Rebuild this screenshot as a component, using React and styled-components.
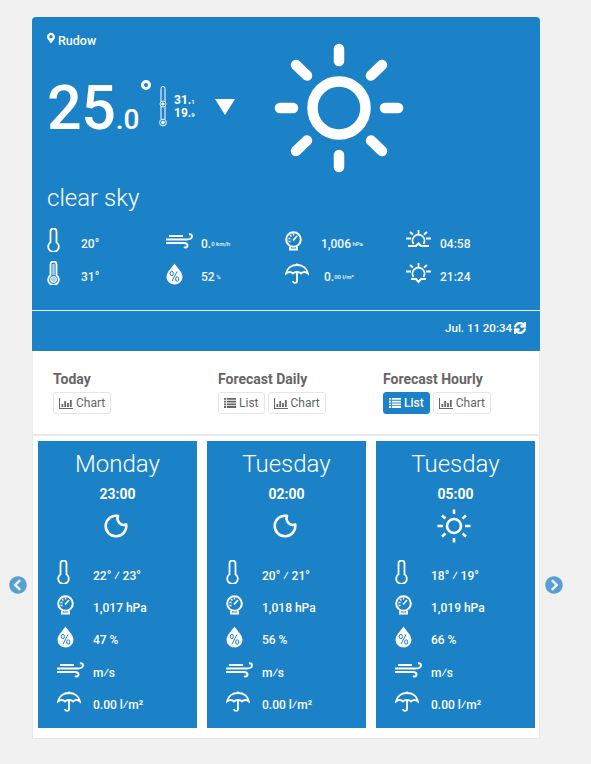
import React from "react";
import styled, { createGlobalStyle } from "styled-components";
import { FaChevronCircleLeft, FaChevronCircleRight, FaMapMarkerAlt, FaSync } from "react-icons/fa";

const Global = createGlobalStyle`
  html, body { margin: 0; padding: 0; background: #f1f1f1; }
  body { font-family: Roboto, "Liberation Sans", sans-serif; height: 764px; overflow: hidden; }
`;
const BLUE = "#1c82c7";

const Wrapper = styled.div`
  width: 508px; margin: 17px 0 0 32px; position: relative;
`;
const Hero = styled.section`
  background: ${BLUE}; color: #fff; border-radius: 4px 4px 0 0; height: 334px;
  display: flex; flex-direction: column;
`;
const HeroMain = styled.div`
  height: 294px; box-sizing: border-box; padding: 14px 0 0 15px; border-bottom: 1px solid #e4f1fa;
  display: flex; flex-direction: column;
`;
const Location = styled.div`
  display: flex; align-items: center; gap: 3px; height: 18px; font-size: 12.5px; font-weight: 500;
  svg { width: 8px; height: 12px; margin-top: -5px; }
`;
const NowRow = styled.div`
  display: flex; height: 109px; margin-top: 2px; position: relative;
`;
const BigTemp = styled.div`
  font-size: 61px; font-weight: 500; line-height: 66px; margin: 24px 0 0 0; letter-spacing: -0.3px;
  width: 94px; white-space: nowrap;
  small { font-size: 28px; font-weight: 500; letter-spacing: 0; }
`;
const Degree = styled.span`
  width: 10px; height: 10px; box-sizing: border-box; border: 3px solid #fff; border-radius: 50%;
  margin: 29px 0 0 0; flex: none;
`;
const DoubleThermo = styled.svg`
  width: 10px; height: 42px; margin: 35px 0 0 7px; flex: none;
`;
const MinMax = styled.div`
  font-size: 12px; font-weight: 700; line-height: 13px; margin: 43px 0 0 6px; width: 41px;
  small { font-size: 6px; line-height: 0; }
`;
const Trend = styled.span`
  width: 0; height: 0; border-left: 10px solid transparent; border-right: 10px solid transparent;
  border-top: 16px solid #fff; margin: 48px 0 0 0; flex: none;
`;
const BigSunBox = styled.div`
  width: 130px; height: 130px; margin: -8px 0 0 39px; flex: none;
`;
const Condition = styled.div`
  font-size: 24px; font-weight: 300; line-height: 28px; margin-top: 24px;
`;
const Stats = styled.div`
  display: grid; grid-template-columns: 119px 119px 120px 90px; grid-auto-rows: 33px; margin-top: 15px;
`;
const Stat = styled.div`
  display: flex; align-items: center; font-size: 12px; font-weight: 500; color: #f2f8fc;
  small { font-size: 6px; }
`;
const StatIcon = styled.span`
  width: ${p => p.$w || 34}px; display: flex; flex: none; align-items: center; margin-top: -6px;
`;
const Updated = styled.div`
  flex: 1; display: flex; align-items: center; justify-content: flex-end; gap: 2px; padding: 0 14px 6px 0;
  font-size: 11.5px; font-weight: 500;
  svg { width: 12px; height: 12px; stroke: currentColor; stroke-width: 30px; }
`;
const Menu = styled.nav`
  background: #fff; height: 83px; box-sizing: border-box; padding: 20px 0 0 20px;
  display: grid; grid-template-columns: repeat(3, 165px);
  border-left: 1px solid #ececec; border-right: 1px solid #ececec;
`;
const MenuGroup = styled.div`display: flex; flex-direction: column;`;
const MenuTitle = styled.div`
  font-size: 14px; font-weight: 700; color: #666; line-height: 16px; margin-bottom: 5px; white-space: nowrap;
`;
const Buttons = styled.div`display: flex; gap: 3px;`;
const Btn = styled.button`
  height: 22px; box-sizing: border-box; padding: 0 5px; border-radius: 3px; display: flex; align-items: center; gap: 3px;
  font: 400 12px Roboto, sans-serif;
  background: ${p => p.$active ? BLUE : "#fff"}; color: ${p => p.$active ? "#fff" : "#666"};
  border: 1px solid ${p => p.$active ? BLUE : "#e6e6e6"};
  font-weight: ${p => p.$active ? 500 : 400};
  svg { flex: none; }
`;
const Forecast = styled.section`
  background: #fff; border: 1px solid #e8e8e8; border-top-width: 2px; height: 305px; box-sizing: border-box;
  padding: 5px 4px 0 5px; display: flex; gap: 10px;
`;
const Card = styled.article`
  width: 159px; height: 287px; background: ${BLUE}; color: #fff; display: flex; flex-direction: column; flex: none;
`;
const Day = styled.div`
  font-size: 24px; font-weight: 300; text-align: center; line-height: 28px; margin-top: 9px;
`;
const Time = styled.div`
  font-size: 14px; font-weight: 700; text-align: center; line-height: 16px; margin-top: 8px;
`;
const CardIcon = styled.div`
  height: 38px; margin: 5px 4px 0 0; display: flex; justify-content: center; align-items: center;
`;
const Rows = styled.div`
  margin-top: 15px; padding-left: 19px; display: flex; flex-direction: column;
`;
const Row = styled.div`
  height: 32.2px; display: flex; align-items: center; font-size: 12px; font-weight: 500;
`;
const RowIcon = styled.span`width: 36px; flex: none; display: flex; align-items: center; margin-top: -6px;`;
const ThermoSvg = styled.svg`margin-top: -2px;`;
const Arrow = styled.span`
  position: absolute; top: 559px; left: ${p => p.$left}px; color: #559fd3; display: flex;
  svg { width: 18px; height: 18px; }
`;

const Sun = ({ size }) => (
  <svg width={size} height={size} viewBox="0 0 130 130" fill="none" stroke="#fff" strokeLinecap="round">
    <circle cx="65" cy="65" r="26.5" strokeWidth="10.5" />
    <path strokeWidth="10.5" d="M65 6V18M65 112V124M6 65H19M111 65H124M22 22L33 32.500M108 22L97 32.500M22 108L33 97.500M108 108L97 97.500" />
  </svg>
);
const SmallSun = () => (
  <svg width="36" height="36" viewBox="0 0 36 36" fill="none" stroke="#fff" strokeLinecap="butt" strokeWidth="2.600">
    <circle cx="18" cy="18" r="7" />
    <path d="M18 1.500V6M18 30V34.500M1.500 18H7M29 18H34.500M6 7.500L9.500 10.500M30 7.500L26.500 10.500M6 28.500L9.500 25.500M30 28.500L26.500 25.500" />
  </svg>
);
const Moon = () => (
  <svg width="24" height="24" viewBox="0 0 24 24" fill="none" stroke="#fff" strokeWidth="2.600" strokeLinejoin="round">
    <path d="M14 1.900A10.300 10.300 0 1 0 22.200 10.500A6.500 6.500 0 0 1 14 1.900Z" />
  </svg>
);
const Thermo = ({ filled }) => (
  <ThermoSvg width="14" height="24" viewBox="0 0 14 24" fill="none" stroke="#fff" strokeWidth="1.800">
    <path d="M3.500 14.200V3.500A3 3 0 0 1 9.500 3.500V14.200A5.300 5.300 0 1 1 3.500 14.200Z" />
    {filled ? <><path d="M6.500 3V14" strokeWidth="2.500" stroke="#a9d0ea" /><circle cx="6.500" cy="18.500" r="3" fill="#a9d0ea" stroke="#fff" strokeWidth="1" /></> : null}
  </ThermoSvg>
);
const Wind = () => (
  <svg width="27" height="16" viewBox="0 0 27 16" fill="none" stroke="#fff" strokeWidth="2" strokeLinecap="butt">
    <path d="M0 6.500H21C24 6.500 26 5 26 3.200C26 1.800 24.500 1 23 1.500" />
    <path d="M3 3H17" />
    <path d="M0 10H18C20 10 21.500 10.800 21.500 12.500C21.500 14.200 19.500 15 18 14" />
  </svg>
);
const Gauge = () => (
  <svg width="17" height="20" viewBox="0 0 17 20" fill="none" stroke="#fff">
    <circle cx="8.500" cy="8.500" r="7.300" strokeWidth="2" />
    <path d="M8 9.500L12 5" strokeWidth="1.800" />
    <path d="M3.500 7.500H5.500M5 4L6.500 5.500M8.500 2.500V4.500M3.500 10.500H5.500" strokeWidth="1.400" />
    <path d="M5 15.500V18.500H12V15.500" strokeWidth="2" />
  </svg>
);
const Drop = () => (
  <svg width="17" height="22" viewBox="0 0 17 22">
    <path d="M8.500 0.500C11 4.500 16.500 9 16.500 14A8 7.500 0 0 1 0.500 14C0.500 9 6 4.500 8.500 0.500Z" fill="#fff" />
    <path d="M11 8.500L6 18" stroke={BLUE} strokeWidth="1" />
    <ellipse cx="5.800" cy="10.500" rx="1.600" ry="2.200" fill="none" stroke={BLUE} strokeWidth="1" />
    <ellipse cx="11.200" cy="16" rx="1.600" ry="2.200" fill="none" stroke={BLUE} strokeWidth="1" />
  </svg>
);
const Umbrella = () => (
  <svg width="24" height="21" viewBox="0 0 24 21" fill="none" stroke="#fff" strokeWidth="1.800">
    <path d="M1 10.500C2 5 6.500 2 12 2C17.500 2 22 5 23 10.500C20.500 8.500 18 8.500 16 10.500C14.500 8.500 9.500 8.500 8 10.500C6 8.500 3.500 8.500 1 10.500Z" />
    <path d="M12 0.500V2M12 9V18C12 20.500 8 20.500 8 18" />
  </svg>
);
const SunEdge = ({ down }) => (
  <svg width="27" height="22" viewBox="0 0 27 22" fill="none" stroke="#fff" strokeWidth="1.800">
    <path d="M13.500 0V4.500M1 8.500H6M21 8.500H26M5 2L8 4.500M22 2L19 4.500" />
    <path d="M8.500 14A6 6 0 1 1 18.500 14" />
    {down
      ? <path d="M6 16H11L13.500 19L16 16H21" strokeWidth="2" />
      : <path d="M3 16H11L13.500 13.500L16 16H24" strokeWidth="2" />}
  </svg>
);
const ChartGlyph = ({ color = "#666" }) => (
  <svg width="14" height="11" viewBox="0 0 14 11" fill={color}>
    <path d="M0 0H1V10H14V11H0Z" />
    <path d="M2.500 6H4.300V9H2.500ZM5.300 3H7.100V9H5.300ZM8.100 5H9.900V9H8.100ZM10.900 2H12.700V9H10.900Z" />
  </svg>
);
const ListGlyph = () => (
  <svg width="12" height="10" viewBox="0 0 12 10" fill="currentColor">
    <path d="M0 0H2.200V1.800H0ZM3 0H12V1.800H3ZM0 2.700H2.200V4.500H0ZM3 2.700H12V4.500H3ZM0 5.400H2.200V7.200H0ZM3 5.400H12V7.200H3ZM0 8.100H2.200V9.900H0ZM3 8.100H12V9.900H3Z" />
  </svg>
);

const forecast = [
  { day: "Monday", time: "23:00", icon: <Moon />, temp: "22° ⁄ 23°", hpa: "1,017 hPa", hum: "47 %" },
  { day: "Tuesday", time: "02:00", icon: <Moon />, temp: "20° ⁄ 21°", hpa: "1,018 hPa", hum: "56 %" },
  { day: "Tuesday", time: "05:00", icon: <SmallSun />, temp: "18° ⁄ 19°", hpa: "1,019 hPa", hum: "66 %" },
];

export default function App() {
  return (
    <>
      <Global />
      <Wrapper>
        <Hero>
          <HeroMain>
            <Location><FaMapMarkerAlt />Rudow</Location>
            <NowRow>
              <BigTemp>25<small>.0</small></BigTemp>
              <Degree />
              <DoubleThermo viewBox="0 0 10 42" fill="none" stroke="#fff" strokeWidth="1">
                <path d="M3 16V2.500A2 2 0 0 1 7 2.500V16M3 20V33M7 20V33" />
                <circle cx="5" cy="18" r="3" /><circle cx="5" cy="18" r="1.200" fill="#fff" />
                <circle cx="5" cy="36.500" r="3.400" /><circle cx="5" cy="36.500" r="1.400" fill="#fff" />
              </DoubleThermo>
              <MinMax>31.<small>1</small><br />19.<small>9</small></MinMax>
              <Trend />
              <BigSunBox><Sun size={130} /></BigSunBox>
            </NowRow>
            <Condition>clear sky</Condition>
            <Stats>
              <Stat><StatIcon><Thermo /></StatIcon>20°</Stat>
              <Stat><StatIcon $w={35}><Wind /></StatIcon>0.<small>0 km/h</small></Stat>
              <Stat><StatIcon $w={36}><Gauge /></StatIcon>1,006 <small>&nbsp;hPa</small></Stat>
              <Stat><StatIcon $w={35}><SunEdge /></StatIcon>04:58</Stat>
              <Stat><StatIcon><Thermo filled /></StatIcon>31°</Stat>
              <Stat><StatIcon $w={35}><Drop /></StatIcon>52 <small>&nbsp;%</small></Stat>
              <Stat><StatIcon $w={39}><Umbrella /></StatIcon>0.<small>00 l/m²</small></Stat>
              <Stat><StatIcon $w={35}><SunEdge down /></StatIcon>21:24</Stat>
            </Stats>
          </HeroMain>
          <Updated>Jul. 11 20:34 <FaSync /></Updated>
        </Hero>
        <Menu>
          <MenuGroup>
            <MenuTitle>Today</MenuTitle>
            <Buttons><Btn><ChartGlyph />Chart</Btn></Buttons>
          </MenuGroup>
          <MenuGroup>
            <MenuTitle>Forecast Daily</MenuTitle>
            <Buttons>
              <Btn><ListGlyph />List</Btn>
              <Btn><ChartGlyph />Chart</Btn>
            </Buttons>
          </MenuGroup>
          <MenuGroup>
            <MenuTitle>Forecast Hourly</MenuTitle>
            <Buttons>
              <Btn $active><ListGlyph />List</Btn>
              <Btn><ChartGlyph />Chart</Btn>
            </Buttons>
          </MenuGroup>
        </Menu>
        <Forecast>
          {forecast.map(f => (
            <Card key={f.time}>
              <Day>{f.day}</Day>
              <Time>{f.time}</Time>
              <CardIcon>{f.icon}</CardIcon>
              <Rows>
                <Row><RowIcon><Thermo /></RowIcon>{f.temp}</Row>
                <Row><RowIcon><Gauge /></RowIcon>{f.hpa}</Row>
                <Row><RowIcon><Drop /></RowIcon>{f.hum}</Row>
                <Row><RowIcon><Wind /></RowIcon>m⁄s</Row>
                <Row><RowIcon><Umbrella /></RowIcon>0.00 l⁄m²</Row>
              </Rows>
            </Card>
          ))}
        </Forecast>
        <Arrow $left={-23}><FaChevronCircleLeft /></Arrow>
        <Arrow $left={513}><FaChevronCircleRight /></Arrow>
      </Wrapper>
    </>
  );
}
